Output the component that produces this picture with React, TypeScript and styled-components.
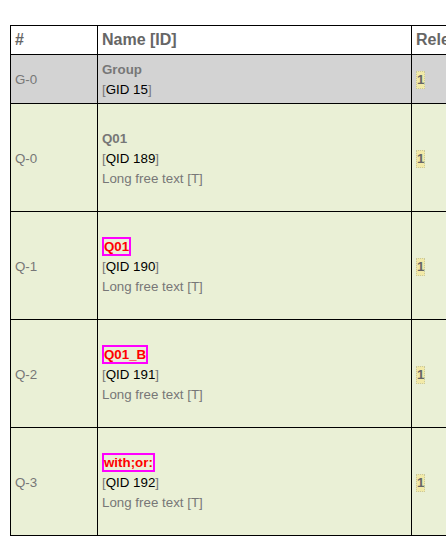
import React from 'react';
import styled, { createGlobalStyle } from 'styled-components';

const GlobalStyle = createGlobalStyle`
  html, body {
    margin: 0;
    padding: 0;
    background: #fff;
    overflow: hidden;
  }
  body {
    font-family: "Liberation Sans", Arial, sans-serif;
    font-size: 13.33px;
    color: #777;
  }
`;

type Row = {
  num: string;
  kind: 'group' | 'question';
  name: string;
  idLabel: string;
  type?: string;
  error?: boolean;
};

const rows: Row[] = [
  { num: 'G-0', kind: 'group', name: 'Group', idLabel: 'GID 15' },
  { num: 'Q-0', kind: 'question', name: 'Q01', idLabel: 'QID 189', type: 'Long free text [T]' },
  { num: 'Q-1', kind: 'question', name: 'Q01', idLabel: 'QID 190', type: 'Long free text [T]', error: true },
  { num: 'Q-2', kind: 'question', name: 'Q01_B', idLabel: 'QID 191', type: 'Long free text [T]', error: true },
  { num: 'Q-3', kind: 'question', name: 'with;or:', idLabel: 'QID 192', type: 'Long free text [T]', error: true },
];

const App = () => {
  return (
    <Page>
      <GlobalStyle />
      <LogicTable>
        <colgroup>
          <col style={{ width: 87 }} />
          <col style={{ width: 314 }} />
          <col style={{ width: 120 }} />
          <col style={{ width: 300 }} />
        </colgroup>
        <thead>
          <tr>
            <HeadCell>#</HeadCell>
            <HeadCell>Name [ID]</HeadCell>
            <HeadCell>Relevance</HeadCell>
            <HeadCell>Text [Help] (Tip)</HeadCell>
          </tr>
        </thead>
        <tbody>
          {rows.map((row) => (
            <BodyRow key={row.num} kind={row.kind}>
              <NumCell>{row.num}</NumCell>
              <Cell>
                <Line>
                  {row.error ? <ErrorName>{row.name}</ErrorName> : <Name>{row.name}</Name>}
                </Line>
                <Line>
                  [<IdText>{row.idLabel}</IdText>]
                </Line>
                {row.type && <Line>{row.type}</Line>}
              </Cell>
              <Cell>
                <Relevance>1</Relevance>
              </Cell>
              <Cell />
            </BodyRow>
          ))}
        </tbody>
      </LogicTable>
    </Page>
  );
};

export default App;

const Page = styled.div`
  padding: 25px 0 0 10px;
  width: 1200px;
`;

const LogicTable = styled.table`
  border-collapse: collapse;
  table-layout: fixed;
  width: 822px;
`;

const HeadCell = styled.th`
  border: 1px solid #000;
  padding: 4px 4px;
  text-align: left;
  font-size: 16px;
  line-height: 20px;
  font-weight: bold;
  color: #666;
  white-space: nowrap;
  overflow: hidden;
`;

const BodyRow = styled.tr<{ kind: 'group' | 'question' }>`
  background: ${(p) => (p.kind === 'group' ? '#d3d3d3' : '#eaf0d6')};
  height: ${(p) => (p.kind === 'group' ? '49px' : '108px')};
`;

const Cell = styled.td`
  border: 1px solid #000;
  padding: 5px 4px 3px;
  vertical-align: middle;
  line-height: 20px;
`;

const NumCell = styled(Cell)`
  color: #777;
`;

const Line = styled.div`
  line-height: 20px;
`;

const Name = styled.span`
  font-weight: bold;
  color: #777;
`;

const ErrorName = styled.span`
  font-weight: bold;
  color: #f00;
  border: 2px solid #f0f;
`;

const IdText = styled.span`
  color: #000;
`;

const Relevance = styled.span`
  display: inline-block;
  line-height: 14px;
  padding: 1px 0;
  font-weight: bold;
  color: #666;
  background: #f2eaa8;
  border: 1px dotted #c8c8a0;
`;
